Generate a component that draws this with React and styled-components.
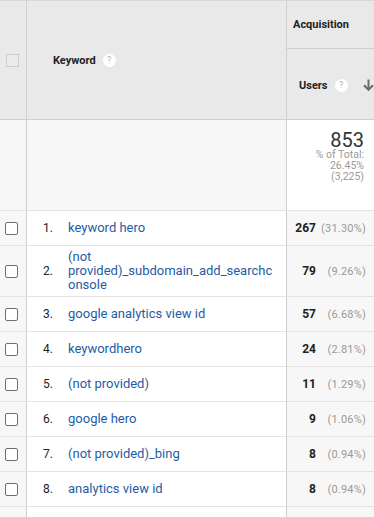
import React from 'react';
import styled, { createGlobalStyle } from 'styled-components';

// ─── Data ─────────────────────────────────────────────────────────────────────
const ROWS = [
  { keyword: 'keyword hero', users: 267, pct: '31.30%' },
  { keyword: '(not provided)_subdomain_add_searchconsole', users: 79, pct: '9.26%' },
  { keyword: 'google analytics view id', users: 57, pct: '6.68%' },
  { keyword: 'keywordhero', users: 24, pct: '2.81%' },
  { keyword: '(not provided)', users: 11, pct: '1.29%' },
  { keyword: 'google hero', users: 9, pct: '1.06%' },
  { keyword: '(not provided)_bing', users: 8, pct: '0.94%' },
  { keyword: 'analytics view id', users: 8, pct: '0.94%' },
];

// ─── Small pieces ─────────────────────────────────────────────────────────────
const HelpIcon = () => <Help>?</Help>;

const SortArrow = () => (
  <svg width="11" height="12" viewBox="0 0 11 12" aria-hidden="true">
    <path d="M5.5 0.5v10" stroke="#6b6b6b" strokeWidth="2" fill="none" />
    <path d="M1 6.2l4.5 4.6L10 6.2" stroke="#6b6b6b" strokeWidth="2" fill="none" />
  </svg>
);

// ─── Component ────────────────────────────────────────────────────────────────
export default function App() {
  return (
    <>
      <GlobalStyle />
      <Report>
        <HeadRow>
          <CheckCol $head>
            <Checkbox $disabled />
          </CheckCol>
          <KeywordHead>
            <HeadLabel>Keyword</HeadLabel>
            <HelpIcon />
          </KeywordHead>
          <UsersHead>
            <GroupLabel>Acquisition</GroupLabel>
            <MetricLabel>
              <HeadLabel>Users</HeadLabel>
              <HelpIcon />
              <SortArrow />
            </MetricLabel>
          </UsersHead>
        </HeadRow>

        <SummaryRow>
          <CheckCol $summary />
          <KeywordCell $summary />
          <SummaryCell>
            <Total>853</Total>
            <TotalNote>% of Total:</TotalNote>
            <TotalNote>26.45%</TotalNote>
            <TotalNote>(3,225)</TotalNote>
          </SummaryCell>
        </SummaryRow>

        {ROWS.map((r, i) => (
          <DataRow key={i}>
            <CheckCol>
              <Checkbox />
            </CheckCol>
            <KeywordCell>
              <Rank>{i + 1}.</Rank>
              <KeywordLink>{r.keyword}</KeywordLink>
            </KeywordCell>
            <UsersCell>
              <Count>{r.users}</Count>
              <Share>({r.pct})</Share>
            </UsersCell>
          </DataRow>
        ))}
        <DataRow>
          <CheckCol />
          <KeywordCell />
          <UsersCell />
        </DataRow>
      </Report>
    </>
  );
}

// ─── Styled components ────────────────────────────────────────────────────────
const GlobalStyle = createGlobalStyle`
  html, body {
    margin: 0;
    padding: 0;
    background: #fff;
    overflow: hidden;
  }
  body {
    font-family: Roboto, 'Liberation Sans', Arial, sans-serif;
    color: #222;
  }
`;

const Report = styled.div`
  width: 374px;
  display: flex;
  flex-direction: column;
`;

const rowGrid = `
  display: grid;
  grid-template-columns: 27px 260px 1fr;
  box-sizing: border-box;
`;

const HeadRow = styled.div`
  ${rowGrid}
  height: 120px;
  background: #e9e9e9;
  border-top: 1px solid #d8d8d8;
  border-bottom: 1px solid #cfcfcf;
`;

const SummaryRow = styled.div`
  ${rowGrid}
  height: 91px;
  border-bottom: 1px solid #e2e2e2;
`;

const DataRow = styled.div`
  ${rowGrid}
  min-height: 35px;
  border-bottom: 1px solid #e2e2e2;
`;

const CheckCol = styled.div`
  box-sizing: border-box;
  border-right: 1px solid #cfcfcf;
  display: flex;
  align-items: center;
  padding-left: 5px;
  background: ${({ $head }) => ($head ? 'transparent' : '#f7f7f7')};
`;

const Checkbox = styled.span`
  display: block;
  box-sizing: border-box;
  width: 13px;
  height: 13px;
  border-radius: ${({ $disabled }) => ($disabled ? '0' : '2px')};
  border: 1px solid ${({ $disabled }) => ($disabled ? '#cdcdcd' : '#6f6f6f')};
  background: ${({ $disabled }) => ($disabled ? '#ebebeb' : '#fff')};
  margin-left: ${({ $disabled }) => ($disabled ? '1px' : '0')};
`;

const KeywordHead = styled.div`
  box-sizing: border-box;
  border-right: 1px solid #cfcfcf;
  display: flex;
  align-items: center;
  gap: 7px;
  padding-left: 26px;
`;

const HeadLabel = styled.span`
  font-size: 11px;
  font-weight: 700;
  color: #222;
`;

const Help = styled.span`
  display: inline-flex;
  align-items: center;
  justify-content: center;
  width: 13px;
  height: 13px;
  border-radius: 50%;
  background: #fff;
  color: #b5b5b5;
  font-size: 9px;
  line-height: 1;
`;

const UsersHead = styled.div`
  display: flex;
  flex-direction: column;
`;

const GroupLabel = styled.div`
  box-sizing: border-box;
  height: 48px;
  border-bottom: 1px solid #cfcfcf;
  display: flex;
  align-items: center;
  padding-left: 6px;
  font-size: 11px;
  font-weight: 700;
  color: #222;
`;

const MetricLabel = styled.div`
  flex: 1;
  display: flex;
  align-items: center;
  padding: 2px 0 0 12px;
  gap: 7px;

  svg {
    margin-left: 8px;
  }
`;

const KeywordCell = styled.div`
  box-sizing: border-box;
  border-right: 1px solid #cfcfcf;
  display: flex;
  align-items: center;
  padding: 4px 10px 4px 16px;
  background: ${({ $summary }) => ($summary ? '#f7f7f7' : '#fff')};
`;

const Rank = styled.span`
  flex: 0 0 25px;
  font-size: 12px;
  color: #222;
`;

const KeywordLink = styled.span`
  flex: 1;
  min-width: 0;
  font-size: 13px;
  line-height: 14px;
  color: #1f5ca5;
  overflow-wrap: anywhere;
`;

const SummaryCell = styled.div`
  display: flex;
  flex-direction: column;
  align-items: flex-end;
  padding: 12px 10px 0 0;
  background: #fff;
`;

const Total = styled.div`
  font-size: 20px;
  line-height: 17px;
  color: #333;
`;

const TotalNote = styled.div`
  height: 11px;
  font-size: 10.5px;
  line-height: 11px;
  color: #9a9a9a;
  text-align: right;
  white-space: nowrap;
`;

const UsersCell = styled.div`
  display: flex;
  align-items: center;
  background: #f7f7f7;
  padding-right: 8px;
`;

const Count = styled.span`
  flex: 0 0 29px;
  text-align: right;
  font-size: 12px;
  font-weight: 700;
  color: #222;
`;

const Share = styled.span`
  flex: 1;
  text-align: right;
  font-size: 11px;
  letter-spacing: 0.2px;
  color: #9a9a9a;
`;
